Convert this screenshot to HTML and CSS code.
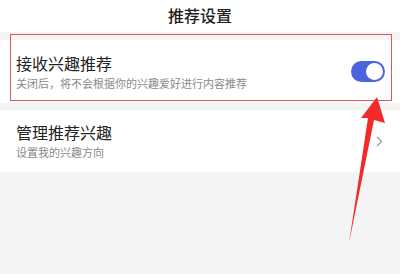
FILE: index.html
```html
<!DOCTYPE html>
<html lang="zh">
<head>
  <meta charset="UTF-8">
  <title>推荐设置</title>
  <link rel="stylesheet" href="styles.css">
</head>
<body>
  <div class="page">
    <div class="header">推荐设置</div>

    <div class="row first">
      <div class="text">
        <div class="title">接收兴趣推荐</div>
        <div class="desc">关闭后，将不会根据你的兴趣爱好进行内容推荐</div>
      </div>
      <div class="switch on"><span class="knob"></span></div>
    </div>

    <div class="row second">
      <div class="text">
        <div class="title">管理推荐兴趣</div>
        <div class="desc">设置我的兴趣方向</div>
      </div>
      <svg class="chevron" width="7" height="11" viewBox="0 0 7 11">
        <path d="M1 1 L5.5 5.5 L1 10" fill="none" stroke="#9a9a9a" stroke-width="1.3"/>
      </svg>
    </div>

    <!-- annotation -->
    <div class="mark"></div>
    <svg class="arrow" width="400" height="274" viewBox="0 0 400 274">
      <polygon points="377,97 385,123 374,120 349,243 368,118 361,118" fill="#f32a2a"/>
    </svg>
  </div>
</body>
</html>
```

FILE: styles.css
```css
body {
  margin: 0;
  font-family: "Noto Sans CJK SC", "Noto Sans", sans-serif;
  background-color: #f4f4f4;
}

.page {
  position: relative;
  width: 400px;
  height: 274px;
  overflow: hidden;
  background-color: #f4f4f4;
}

.header {
  height: 32px;
  line-height: 30px;
  text-align: center;
  font-size: 16px;
  font-weight: 500;
  color: #222;
  background-color: #fff;
}

.row {
  display: flex;
  align-items: center;
  justify-content: space-between;
  background-color: #fff;
  padding: 0 15px 0 16px;
}

.row.first {
  margin-top: 8px;
  height: 63px;
}

.row.second {
  margin-top: 7px;
  height: 62px;
  padding-right: 17px;
}

.title {
  font-size: 16px;
  line-height: 20px;
  color: #222;
}

.desc {
  margin-top: 2px;
  font-size: 11px;
  line-height: 16px;
  color: #8a8a8a;
}

.switch {
  position: relative;
  width: 34px;
  height: 21px;
  border-radius: 11px;
  background-color: #4a63df;
}

.switch .knob {
  position: absolute;
  top: 2px;
  right: 2px;
  width: 17px;
  height: 17px;
  border-radius: 50%;
  background-color: #fff;
}

.mark {
  position: absolute;
  left: 10px;
  top: 34px;
  width: 380px;
  height: 65px;
  border: 1px solid #e0585a;
}

.arrow {
  position: absolute;
  left: 0;
  top: 0;
}
```
